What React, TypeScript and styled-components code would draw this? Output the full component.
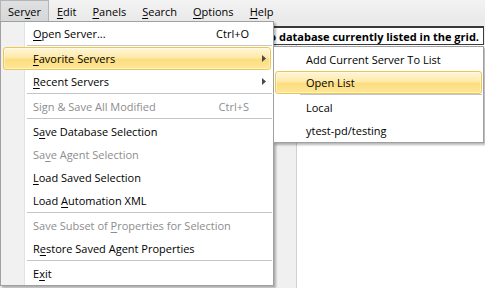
import React from "react";
import styled, { createGlobalStyle, css } from "styled-components";

const GlobalStyle = createGlobalStyle`
  html, body {
    margin: 0;
    padding: 0;
  }
  body {
    font-family: "Open Sans", "Noto Sans", sans-serif;
    font-size: 11px;
    color: #000;
  }
`;

const Window = styled.div`
  position: relative;
  width: 485px;
  height: 288px;
  overflow: hidden;
  background: #f0f0f0;
  display: flex;
  flex-direction: column;
`;

const MenuBar = styled.div`
  height: 21px;
  display: flex;
  align-items: stretch;
  background: linear-gradient(#f3f3f3, #e9e9e9);
`;

const MenuTitle = styled.div<{ $active?: boolean }>`
  display: flex;
  align-items: center;
  padding: 0 7px;
  border: 1px solid transparent;
  border-bottom: none;
  ${(p) =>
    p.$active &&
    css`
      background: linear-gradient(#dfe0e2, #d6d7d9);
      border-color: #b4b4b4;
    `}
`;

const ToolStrip = styled.div`
  height: 5px;
  background: #ececec;
`;

const InfoBox = styled.div`
  height: 16px;
  margin: 0 1px 0 200px;
  border: 1px solid #3a3a3a;
  border-top-width: 2px;
  background: #fff;
  display: flex;
  align-items: center;
  justify-content: flex-end;
  padding-right: 4px;
  font-weight: 700;
  font-size: 11px;
  white-space: nowrap;
`;

const Content = styled.div`
  flex: 1;
  background: #fff;
  border-left: 1px solid #d0d0d0;
  margin-left: 296px;
`;

const Key = styled.u`
  text-decoration-thickness: 1px;
  text-underline-offset: 2px;
`;

const DropMenu = styled.div`
  position: absolute;
  top: 21px;
  left: 0;
  width: 272px;
  border: 1px solid #a0a0a0;
  background: linear-gradient(
    to right,
    #f1f1f1 0 23px,
    #e2e3e3 23px 24px,
    #fff 24px
  );
  box-shadow: 2px 2px 2px rgba(0, 0, 0, 0.28);
`;

const SubMenu = styled.div`
  position: absolute;
  top: 24px;
  left: 272px;
  width: 209px;
  padding-top: 1px;
  border: 1px solid #a0a0a0;
  background: #fff;
  box-shadow: 2px 2px 2px rgba(0, 0, 0, 0.28);
`;

const Row = styled.div<{ $disabled?: boolean; $hot?: boolean; $indent: number }>`
  height: 21px;
  margin: 0 ${(p) => (p.$indent === 29 ? 2 : 1)}px;
  padding: 0 4px 0 ${(p) => p.$indent}px;
  display: flex;
  align-items: center;
  border: 1px solid transparent;
  border-radius: 3px;
  white-space: nowrap;
  color: ${(p) => (p.$disabled ? "#8d8d8d" : "#000")};
  ${(p) =>
    p.$hot &&
    css`
      border-color: #eec652;
      background: linear-gradient(
        #fff6d8 0%,
        #fdeaa9 45%,
        #fcdd7f 55%,
        #fde79a 100%
      );
      box-shadow: inset 0 0 0 1px rgba(255, 255, 255, 0.45);
    `}
`;

const Label = styled.span`
  flex: 1;
`;

const Shortcut = styled.span``;

const ArrowSlot = styled.span`
  width: 17px;
  display: flex;
  justify-content: flex-end;
  align-items: center;
`;

const Separator = styled.div<{ $indent: number }>`
  height: 2px;
  margin: 0 1px 0 ${(p) => p.$indent}px;
  border-top: 1px solid #c5c5c5;
  box-sizing: border-box;
`;

type Item =
  | { sep: true }
  | {
      sep?: false;
      label: string;
      shortcut?: string;
      sub?: boolean;
      disabled?: boolean;
      hot?: boolean;
    };

const serverItems: Item[] = [
  { label: "_Open Server...", shortcut: "Ctrl+O" },
  { sep: true },
  { label: "_Favorite Servers", sub: true, hot: true },
  { label: "_Recent Servers", sub: true },
  { sep: true },
  { label: "Sign & Save All Modified", shortcut: "Ctrl+S", disabled: true },
  { sep: true },
  { label: "S_ave Database Selection" },
  { label: "Sa_ve Agent Selection", disabled: true },
  { label: "_Load Saved Selection" },
  { label: "Load _Automation XML" },
  { sep: true },
  { label: "Save Subset of _Properties for Selection", disabled: true },
  { label: "R_estore Saved Agent Properties" },
  { sep: true },
  { label: "E_xit" },
];

const favoriteItems: Item[] = [
  { label: "Add Current Server To List" },
  { label: "Open List", hot: true },
  { sep: true },
  { label: "Local" },
  { label: "ytest-pd/testing" },
];

const mnemonic = (s: string) => {
  const i = s.indexOf("_");
  if (i < 0) return s;
  return (
    <>
      {s.slice(0, i)}
      <Key>{s[i + 1]}</Key>
      {s.slice(i + 2)}
    </>
  );
};

const Arrow = () => (
  <svg width="4" height="7" viewBox="0 0 4 7">
    <polygon points="0,0 4,3.5 0,7" fill="#4a4a4a" />
  </svg>
);

const MenuRows = ({
  items,
  indent,
  sepIndent,
}: {
  items: Item[];
  indent: number;
  sepIndent: number;
}) => (
  <>
    {items.map((it, i) =>
      it.sep ? (
        <Separator key={i} $indent={sepIndent} />
      ) : (
        <Row key={i} $indent={indent} $disabled={it.disabled} $hot={it.hot}>
          <Label>{mnemonic(it.label)}</Label>
          {it.shortcut && <Shortcut>{it.shortcut}</Shortcut>}
          <ArrowSlot>{it.sub && <Arrow />}</ArrowSlot>
        </Row>
      )
    )}
  </>
);

const titles = ["Ser_ver", "_Edit", "_Panels", "_Search", "_Options", "_Help"];

export default function App() {
  return (
    <Window>
      <GlobalStyle />
      <MenuBar>
        {titles.map((t, i) => (
          <MenuTitle key={t} $active={i === 0}>
            {mnemonic(t)}
          </MenuTitle>
        ))}
      </MenuBar>
      <ToolStrip />
      <InfoBox>to database currently listed in the grid.</InfoBox>
      <Content />
      <DropMenu>
        <MenuRows items={serverItems} indent={29} sepIndent={26} />
        <SubMenu>
          <MenuRows items={favoriteItems} indent={30} sepIndent={26} />
        </SubMenu>
      </DropMenu>
    </Window>
  );
}
